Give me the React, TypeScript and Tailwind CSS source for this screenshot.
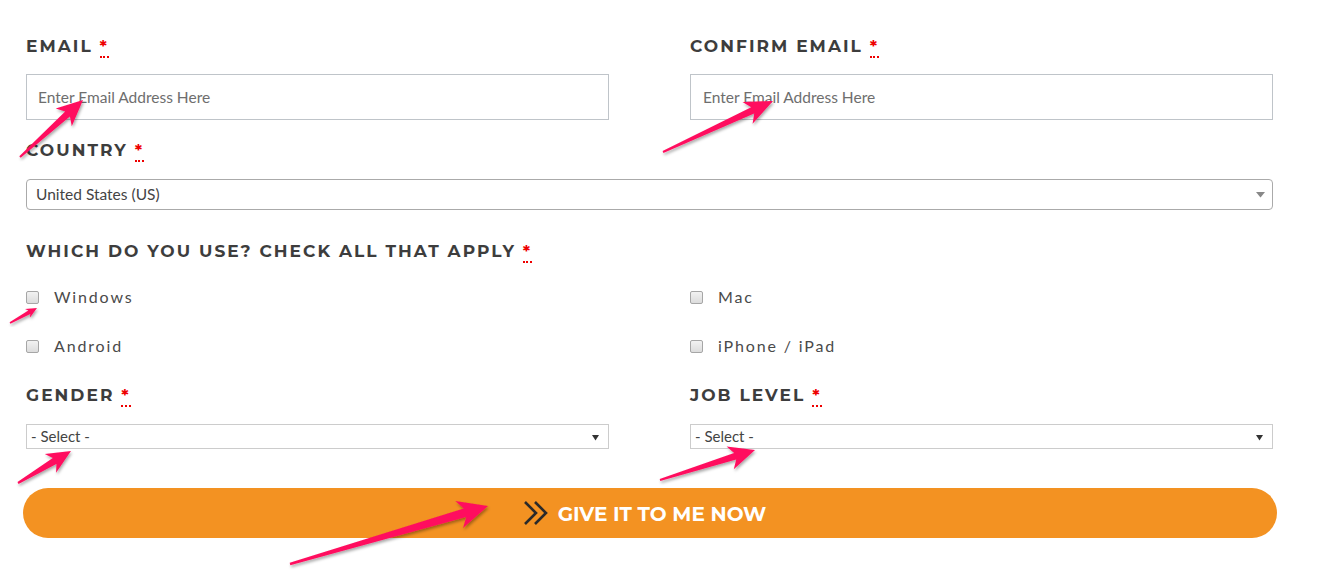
import React from "react"

type Pt = [number, number]

// annotation arrow drawn as a tapered polygon
function arrowPoints(t: Pt, h: Pt, headLen: number, headW: number, tailW: number, neckW: number) {
  const dx = h[0] - t[0]
  const dy = h[1] - t[1]
  const len = Math.hypot(dx, dy)
  const ux = dx / len
  const uy = dy / len
  const nx = -uy
  const ny = ux
  const b: Pt = [h[0] - ux * headLen, h[1] - uy * headLen]
  const neck: Pt = [h[0] - ux * headLen * 0.8, h[1] - uy * headLen * 0.8]
  const pts: Pt[] = [
    [t[0] + nx * tailW, t[1] + ny * tailW],
    [neck[0] + nx * neckW, neck[1] + ny * neckW],
    [b[0] + nx * headW, b[1] + ny * headW],
    h,
    [b[0] - nx * headW, b[1] - ny * headW],
    [neck[0] - nx * neckW, neck[1] - ny * neckW],
    [t[0] - nx * tailW, t[1] - ny * tailW],
  ]
  return pts.map((p) => `${p[0].toFixed(1)},${p[1].toFixed(1)}`).join(" ")
}

const arrows: { t: Pt; h: Pt; hl: number; hw: number; tw: number; nw: number }[] = [
  { t: [20, 157], h: [83, 100], hl: 26, hw: 12, tw: 1, nw: 3.5 },
  { t: [663, 152], h: [773, 101], hl: 28, hw: 12, tw: 1, nw: 3.5 },
  { t: [10, 323], h: [37, 308], hl: 11, hw: 5, tw: 0.8, nw: 2 },
  { t: [18, 483], h: [71, 451], hl: 24, hw: 11, tw: 1, nw: 3.5 },
  { t: [660, 480], h: [755, 450], hl: 26, hw: 12, tw: 1, nw: 3.5 },
  { t: [290, 564], h: [488, 506], hl: 30, hw: 14, tw: 1.2, nw: 4.5 },
]

function Label({ children }: { children: React.ReactNode }) {
  return (
    <div className="text-[17px] leading-5 font-bold tracking-[0.12em] text-[#3d3d3d] uppercase" style={{ fontFamily: "Montserrat, 'Open Sans', sans-serif" }}>
      {children}{" "}
      <abbr className="text-[#e00] no-underline border-b-2 border-dotted border-[#e00] font-bold" title="required">*</abbr>
    </div>
  )
}

function Check({ label }: { label: string }) {
  return (
    <div className="flex items-center h-6">
      <span className="w-[13px] h-[13px] rounded-[2px] border border-[#a6a6a6] bg-gradient-to-b from-[#f2f2f2] to-[#dcdcdc]" />
      <span className="ml-[15px] text-[16px] tracking-[0.115em] text-[#4a4a4a]" style={{ fontFamily: "Lato, sans-serif" }}>{label}</span>
    </div>
  )
}

function SmallSelect() {
  return (
    <div className="relative mt-[19px] h-[25px] border border-[#cccccc] bg-white flex items-center pl-[4px] text-[15px] text-[#444]" style={{ fontFamily: "Lato, sans-serif" }}>
      - Select -
      <svg className="absolute right-[9px] top-[9px]" width="7" height="7" viewBox="0 0 7 7">
        <path d="M0 1h7L3.5 6.5z" fill="#333" />
      </svg>
    </div>
  )
}

export default function App() {
  return (
    <div className="relative w-[1322px] h-[571px] bg-white overflow-hidden">
      <div className="w-[1247px] ml-[26px] pt-[36px]">
        {/* email row */}
        <div className="grid grid-cols-2 gap-[81px]">
          <div>
            <Label>Email</Label>
            <input
              className="mt-[18px] w-full h-[46px] border border-[#bfc4c9] px-[11px] text-[15.5px] text-[#444] placeholder:text-[#6e6e6e] outline-none"
              style={{ fontFamily: "Lato, sans-serif" }}
              placeholder="Enter Email Address Here"
            />
          </div>
          <div>
            <Label>Confirm Email</Label>
            <input
              className="mt-[18px] w-full h-[46px] border border-[#bfc4c9] px-[12px] text-[15.5px] text-[#444] placeholder:text-[#6e6e6e] outline-none"
              style={{ fontFamily: "Lato, sans-serif" }}
              placeholder="Enter Email Address Here"
            />
          </div>
        </div>

        {/* country */}
        <div className="mt-[20px]">
          <Label>Country</Label>
          <div className="relative mt-[19px] h-[31px] rounded-[4px] border border-[#aaaaaa] flex items-center pl-[9px] text-[15.5px] text-[#444]" style={{ fontFamily: "Lato, sans-serif" }}>
            United States (US)
            <svg className="absolute right-[7px] top-[12px]" width="9" height="6" viewBox="0 0 9 6">
              <path d="M0 0h9L4.5 5.5z" fill="#888" />
            </svg>
          </div>
        </div>

        {/* devices */}
        <div className="mt-[31px]">
          <Label>Which do you use? Check all that apply</Label>
          <div className="grid grid-cols-2 gap-x-[81px] gap-y-[25px] mt-[24px]">
            <Check label="Windows" />
            <Check label="Mac" />
            <Check label="Android" />
            <Check label="iPhone / iPad" />
          </div>
        </div>

        {/* gender / job */}
        <div className="grid grid-cols-2 gap-[81px] mt-[27px]">
          <div>
            <Label>Gender</Label>
            <SmallSelect />
          </div>
          <div>
            <Label>Job Level</Label>
            <SmallSelect />
          </div>
        </div>

        <button className="mt-[39px] -ml-[3px] w-[1254px] h-[50px] rounded-full bg-[#f39222] flex items-center justify-center gap-[9px] pt-[2px] pr-[11px] text-white text-[20px] font-bold" style={{ fontFamily: "Montserrat, 'Open Sans', sans-serif" }}>
          <svg width="26" height="26" viewBox="0 0 26 26" fill="none" className="-mt-[2px]">
            <path d="M2 2l11 11L2 24M12 2l11 11-11 11" stroke="#2a2a2a" strokeWidth="2.6" />
          </svg>
          GIVE IT TO ME NOW
        </button>
      </div>

      {/* pink annotation arrows */}
      <svg className="absolute inset-0 pointer-events-none" width="1322" height="571">
        <defs>
          <filter id="sh" x="-20%" y="-20%" width="140%" height="140%">
            <feDropShadow dx="1" dy="2" stdDeviation="1.5" floodColor="#000" floodOpacity="0.35" />
          </filter>
        </defs>
        {arrows.map((a, i) => (
          <polygon key={i} points={arrowPoints(a.t, a.h, a.hl, a.hw, a.tw, a.nw)} fill="#ff0f5e" filter="url(#sh)" />
        ))}
      </svg>
    </div>
  )
}
